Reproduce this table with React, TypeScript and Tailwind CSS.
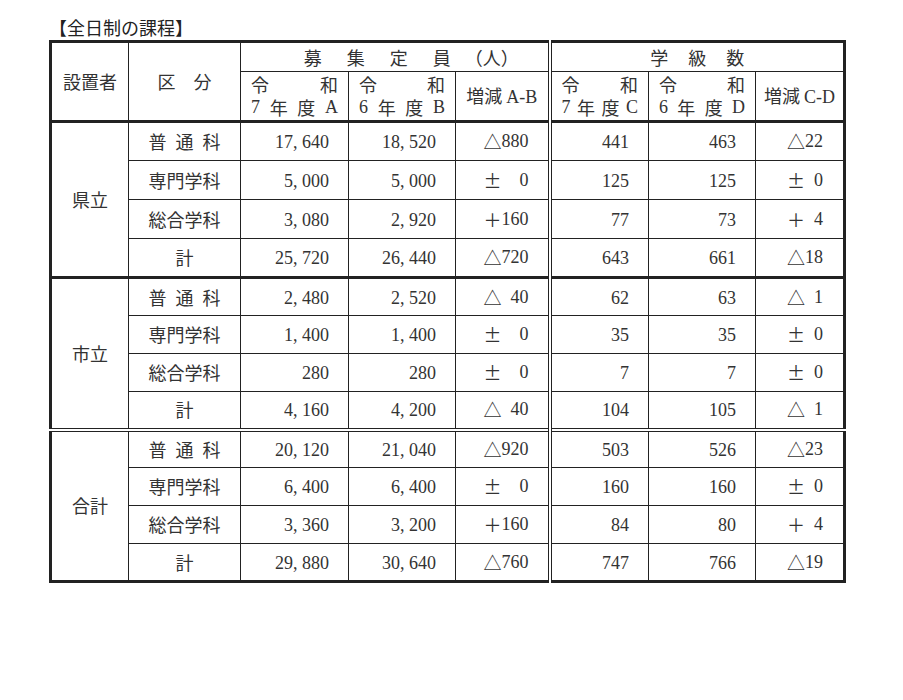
import React from "react";

const JP = "font-['Noto_Sans_CJK_JP',sans-serif]";
const SERIF = "font-['Liberation_Serif','Noto_Sans_CJK_JP',serif]";

type Row = {
  label: string;
  a: string;
  b: string;
  ab: [string, string];
  c: string;
  d: string;
  cd: [string, string];
};

type Group = { name: string; h: string; rows: Row[] };

const groups: Group[] = [
  {
    name: "県立",
    h: "h-[39px]",
    rows: [
      { label: "普通科", a: "17,640", b: "18,520", ab: ["△", "880"], c: "441", d: "463", cd: ["△", "22"] },
      { label: "専門学科", a: "5,000", b: "5,000", ab: ["±", "0"], c: "125", d: "125", cd: ["±", "0"] },
      { label: "総合学科", a: "3,080", b: "2,920", ab: ["＋", "160"], c: "77", d: "73", cd: ["＋", "4"] },
      { label: "計", a: "25,720", b: "26,440", ab: ["△", "720"], c: "643", d: "661", cd: ["△", "18"] },
    ],
  },
  {
    name: "市立",
    h: "h-[38px]",
    rows: [
      { label: "普通科", a: "2,480", b: "2,520", ab: ["△", "40"], c: "62", d: "63", cd: ["△", "1"] },
      { label: "専門学科", a: "1,400", b: "1,400", ab: ["±", "0"], c: "35", d: "35", cd: ["±", "0"] },
      { label: "総合学科", a: "280", b: "280", ab: ["±", "0"], c: "7", d: "7", cd: ["±", "0"] },
      { label: "計", a: "4,160", b: "4,200", ab: ["△", "40"], c: "104", d: "105", cd: ["△", "1"] },
    ],
  },
  {
    name: "合計",
    h: "h-[38px]",
    rows: [
      { label: "普通科", a: "20,120", b: "21,040", ab: ["△", "920"], c: "503", d: "526", cd: ["△", "23"] },
      { label: "専門学科", a: "6,400", b: "6,400", ab: ["±", "0"], c: "160", d: "160", cd: ["±", "0"] },
      { label: "総合学科", a: "3,360", b: "3,200", ab: ["＋", "160"], c: "84", d: "80", cd: ["＋", "4"] },
      { label: "計", a: "29,880", b: "30,640", ab: ["△", "760"], c: "747", d: "766", cd: ["△", "19"] },
    ],
  },
];

function Num({ v }: { v: string }) {
  const parts = v.split(",");
  return (
    <span className={SERIF}>
      {parts.map((p, i) => (
        <span key={i}>
          {i > 0 && <span className="inline-block w-[0.5em] text-left">,</span>}
          {p}
        </span>
      ))}
    </span>
  );
}

function Diff({ sign, n, w }: { sign: string; n: string; w: string }) {
  return (
    <span className={`inline-flex justify-between ${w}`}>
      <span className={JP}>{sign}</span>
      <span className={SERIF}>{n}</span>
    </span>
  );
}

function Label({ text }: { text: string }) {
  if (text === "計") return <span>計</span>;
  return (
    <span className="inline-flex w-[72px] justify-between">
      {text.split("").map((ch, i) => (
        <span key={i}>{ch}</span>
      ))}
    </span>
  );
}

function YearHead({ year, letter }: { year: string; letter: string }) {
  return (
    <div className="flex flex-col px-[10px]">
      <div className="flex justify-between leading-[23px]">
        <span>令</span>
        <span>和</span>
      </div>
      <div className="flex justify-between leading-[23px]">
        <span className={SERIF}>{year}</span>
        <span>年</span>
        <span>度</span>
        <span className={SERIF}>{letter}</span>
      </div>
    </div>
  );
}

const cell = "border border-[#222] p-0";
const dbl = "border-r-4 [border-right-style:double]";

export default function App() {
  return (
    <div className={`min-h-[700px] bg-white pl-[49px] pt-[15px] text-[#333] ${JP}`}>
      <div className="text-[18px] leading-[25px] text-[#222]">【全日制の課程】</div>
      <table className="w-[794px] table-fixed border-collapse border-[3px] border-[#222] text-[18px]">
        <colgroup>
          <col className="w-[78px]" />
          <col className="w-[112px]" />
          <col className="w-[108px]" />
          <col className="w-[107px]" />
          <col className="w-[94px]" />
          <col className="w-[99px]" />
          <col className="w-[107px]" />
          <col className="w-[89px]" />
        </colgroup>
        <thead>
          <tr className="h-[30px]">
            <th rowSpan={2} className={`${cell} border-b-[3px] font-normal`}>
              設置者
            </th>
            <th rowSpan={2} className={`${cell} border-b-[3px] font-normal`}>
              <span className="inline-flex w-[54px] justify-between">
                <span>区</span>
                <span>分</span>
              </span>
            </th>
            <th colSpan={3} className={`${cell} ${dbl} pl-[34px] font-normal`}>
              <span className="inline-flex">
                <span className="mr-[25px]">募</span>
                <span className="mr-[25px]">集</span>
                <span className="mr-[25px]">定</span>
                <span className="mr-[14px]">員</span>
                <span>（人）</span>
              </span>
            </th>
            <th colSpan={3} className={`${cell} font-normal`}>
              <span className="inline-flex gap-[20px]">
                <span>学</span>
                <span>級</span>
                <span>数</span>
              </span>
            </th>
          </tr>
          <tr className="h-[50px]">
            <th className={`${cell} border-b-[3px] font-normal`}>
              <YearHead year="7" letter="A" />
            </th>
            <th className={`${cell} border-b-[3px] font-normal`}>
              <YearHead year="6" letter="B" />
            </th>
            <th className={`${cell} ${dbl} border-b-[3px] font-normal`}>
              増減<span className={`${SERIF} ml-[4px]`}>A-B</span>
            </th>
            <th className={`${cell} border-b-[3px] font-normal`}>
              <YearHead year="7" letter="C" />
            </th>
            <th className={`${cell} border-b-[3px] font-normal`}>
              <YearHead year="6" letter="D" />
            </th>
            <th className={`${cell} border-b-[3px] font-normal`}>
              増減<span className={`${SERIF} ml-[4px]`}>C-D</span>
            </th>
          </tr>
        </thead>
        <tbody>
          {groups.map((g, gi) =>
            g.rows.map((r, ri) => {
              const top =
                ri === 0 && gi === 1
                  ? "border-t-[3px]"
                  : ri === 0 && gi === 2
                  ? "border-t-4 [border-top-style:double]"
                  : "";
              return (
                <tr key={`${gi}-${ri}`} className={g.h}>
                  {ri === 0 && (
                    <td rowSpan={4} className={`${cell} ${top} text-center`}>
                      {g.name}
                    </td>
                  )}
                  <td className={`${cell} ${top} text-center`}>
                    <Label text={r.label} />
                  </td>
                  <td className={`${cell} ${top} pr-[19px] text-right`}>
                    <Num v={r.a} />
                  </td>
                  <td className={`${cell} ${top} pr-[19px] text-right`}>
                    <Num v={r.b} />
                  </td>
                  <td className={`${cell} ${top} ${dbl} pr-[19px] text-right`}>
                    <Diff sign={r.ab[0]} n={r.ab[1]} w="w-[45px]" />
                  </td>
                  <td className={`${cell} ${top} pr-[19px] text-right`}>
                    <Num v={r.c} />
                  </td>
                  <td className={`${cell} ${top} pr-[19px] text-right`}>
                    <Num v={r.d} />
                  </td>
                  <td className={`${cell} ${top} pr-[20px] text-right`}>
                    <Diff sign={r.cd[0]} n={r.cd[1]} w="w-[36px]" />
                  </td>
                </tr>
              );
            })
          )}
        </tbody>
      </table>
    </div>
  );
}
